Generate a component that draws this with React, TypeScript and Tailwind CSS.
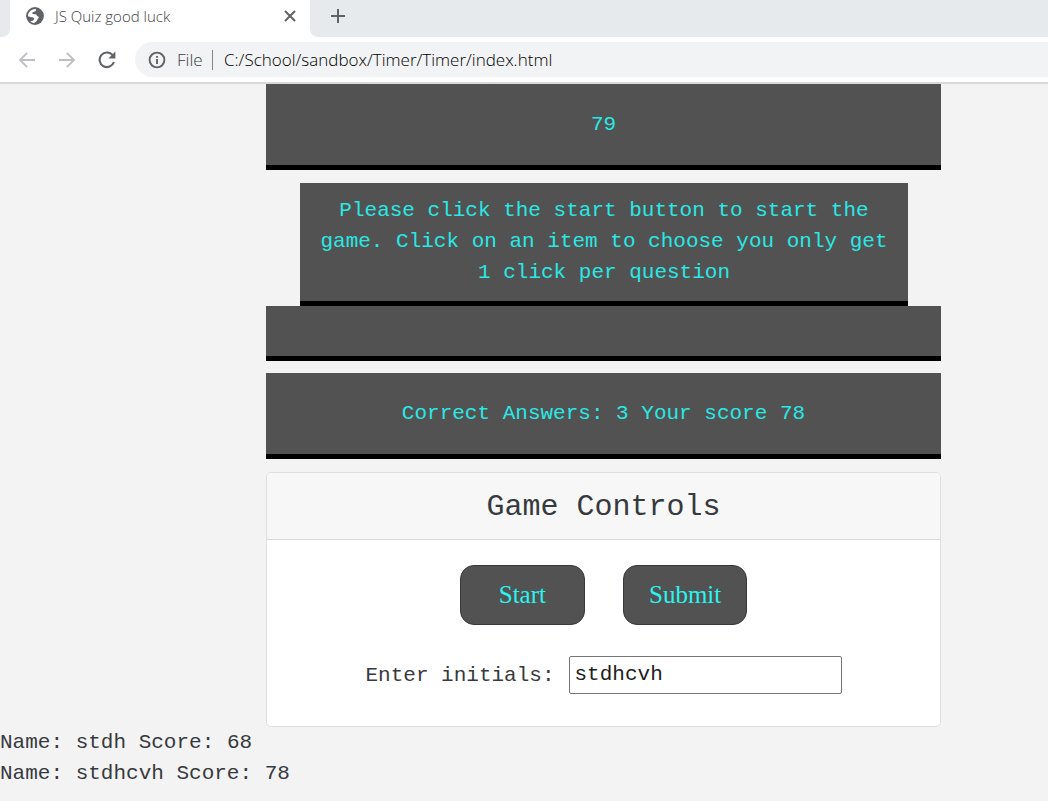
import { ReactNode, useState } from "react";

const scores = [
  { name: "stdh", score: 68 },
  { name: "stdhcvh", score: 78 },
];

function GlobeIcon() {
  return (
    <svg viewBox="0 0 18 18" className="size-[18px]" aria-hidden="true">
      <circle cx="9" cy="9" r="8.9" fill="#5f6368" />
      <path
        d="M9.8 1.9 C10.6 3.6 9.4 4.4 7.9 4.5 C7.5 5.4 6.6 5.5 6.2 5.8 C6.1 7.4 7.6 7.2 9.3 7.3 C10.9 7.4 10.6 9 11.6 9.3 C13.3 9.6 13 11.6 11.6 11.9 C11.2 14.3 9.2 14.9 8.3 16.1 C6.9 16 5.3 15.4 4.2 14.3 L5.3 13.9 C7.4 13.6 8.1 13 8 11.7 C7.9 10.5 6.9 10.2 5.3 10.2 L2 9.2 C1.8 6 4.3 2.1 9.8 1.9 Z"
        fill="#fff"
      />
    </svg>
  );
}

function CloseIcon() {
  return (
    <svg viewBox="0 0 12 12" className="size-3" fill="none" stroke="#5f6368" strokeWidth="2" aria-hidden="true">
      <path d="M1 1 11 11M11 1 1 11" />
    </svg>
  );
}

function PlusIcon() {
  return (
    <svg viewBox="0 0 16 16" className="size-4" fill="none" stroke="#5f6368" strokeWidth="2" aria-hidden="true">
      <path d="M8 1V15M1 8H15" />
    </svg>
  );
}

function ArrowIcon({ className }: { className: string }) {
  return (
    <svg viewBox="0 0 18 18" className={className} fill="none" stroke="currentColor" strokeWidth="1.9" aria-hidden="true">
      <path d="M17 9H2M9.2 1.8 2 9 9.2 16.2" />
    </svg>
  );
}

function ReloadIcon() {
  return (
    <svg viewBox="0 0 18 18" className="size-[18px]" fill="none" stroke="#5f6368" strokeWidth="2.1" aria-hidden="true">
      <path d="M14.6 4.2A7.3 7.3 0 1 0 15.9 11" />
      <path d="M17.4 0.6V7.6H10.4Z" fill="#5f6368" stroke="none" />
    </svg>
  );
}

function InfoIcon() {
  return (
    <svg viewBox="0 0 18 18" className="size-[18px]" fill="none" stroke="#5f6368" strokeWidth="1.9" aria-hidden="true">
      <circle cx="9" cy="9" r="7.4" />
      <path d="M9 8V13M9 5V6.8" />
    </svg>
  );
}

function BrowserBar() {
  return (
    <header className="border-b-2 border-[#d9d9d9] bg-white font-['Open_Sans',sans-serif]">
      <div className="flex h-[37px] bg-[#e7eaed]">
        <div className="flex w-[10px] bg-white">
          <div className="w-full rounded-br-lg bg-[#e7eaed]" />
        </div>
        <div className="flex w-[300px] items-center bg-white pr-[14px] pb-[5px] pl-4">
          <GlobeIcon />
          <span className="ml-[11px] flex-1 text-[15px] leading-5 font-light text-[#3c4043]">JS Quiz good luck</span>
          <button type="button" aria-label="Close tab">
            <CloseIcon />
          </button>
        </div>
        <div className="flex flex-1 bg-white">
          <div className="flex w-full items-center rounded-bl-lg bg-[#e7eaed] pb-[5px] pl-5">
            <button type="button" aria-label="New tab">
              <PlusIcon />
            </button>
          </div>
        </div>
      </div>
      <div className="flex items-center py-[5px] pl-[18px]">
        <div className="flex gap-[22px] text-[#bdbfc2]">
          <button type="button" aria-label="Back">
            <ArrowIcon className="size-[18px]" />
          </button>
          <button type="button" aria-label="Forward">
            <ArrowIcon className="size-[18px] rotate-180" />
          </button>
          <button type="button" aria-label="Reload">
            <ReloadIcon />
          </button>
        </div>
        <div className="ml-[19px] flex h-[35px] flex-1 items-center rounded-l-full bg-[#f1f3f4] pl-[13px] text-[17px]">
          <InfoIcon />
          <span className="ml-[11px] w-[35px] font-light text-[#3c4043]">File</span>
          <span className="h-5 w-px bg-[#80868b]" />
          <input
            aria-label="Address"
            defaultValue="C:/School/sandbox/Timer/Timer/index.html"
            className="ml-[11px] flex-1 bg-transparent font-light text-black outline-none"
          />
        </div>
      </div>
    </header>
  );
}

function Panel({ children, className }: { children?: ReactNode; className: string }) {
  return (
    <section className={`border-b-[5px] border-black bg-[#525252] text-center text-[#29e8e5] ${className}`}>
      {children}
    </section>
  );
}

export default function App() {
  const [initials, setInitials] = useState("stdhcvh");
  const button =
    "rounded-[14px] border border-[#343a40] bg-[#525252] py-3 font-['Liberation_Serif',serif] text-[25px] leading-[34px] text-[#29f5f0]";

  return (
    <div className="min-h-screen bg-[#f3f3f3] font-['Liberation_Mono',monospace] text-[21px] leading-[31px] text-[#363a3e]">
      <BrowserBar />
      <main className="mr-[107px] ml-[266px]">
        <Panel className="py-[25px]">79</Panel>
        <Panel className="mr-[33px] ml-[34px] mt-[13px] px-3 pt-3 pb-[13px]">
          Please click the start button to start the game. Click on an item to choose you only get 1 click per question
        </Panel>
        <Panel className="py-[25px]" />
        <Panel className="mt-3 py-[25px]">Correct Answers: 3 Your score 78</Panel>
        <section className="mt-[13px] overflow-hidden rounded-[5px] border border-[#dfdfdf] bg-white">
          <h2 className="border-b border-[#d9d9d9] bg-[#f7f7f7] pt-4 pb-[14px] text-center text-[30px] leading-9">
            Game Controls
          </h2>
          <form className="pt-[25px] pb-8" onSubmit={(event) => event.preventDefault()}>
            <div className="flex justify-center gap-[38px]">
              <button type="button" className={`px-[38px] ${button}`}>
                Start
              </button>
              <button type="submit" className={`px-[25px] ${button}`}>
                Submit
              </button>
            </div>
            <div className="mt-[31px] flex items-center justify-center gap-[14px]">
              <label htmlFor="initials">Enter initials:</label>
              <input
                id="initials"
                value={initials}
                onChange={(event) => setInitials(event.target.value)}
                className="w-[273px] rounded-[2px] border border-[#767676] px-[5px] py-[3px] leading-[30px] text-[#202020]"
              />
            </div>
          </form>
        </section>
      </main>
      <ul>
        {scores.map((entry) => (
          <li key={entry.name}>
            Name: {entry.name} Score: {entry.score}
          </li>
        ))}
      </ul>
    </div>
  );
}
